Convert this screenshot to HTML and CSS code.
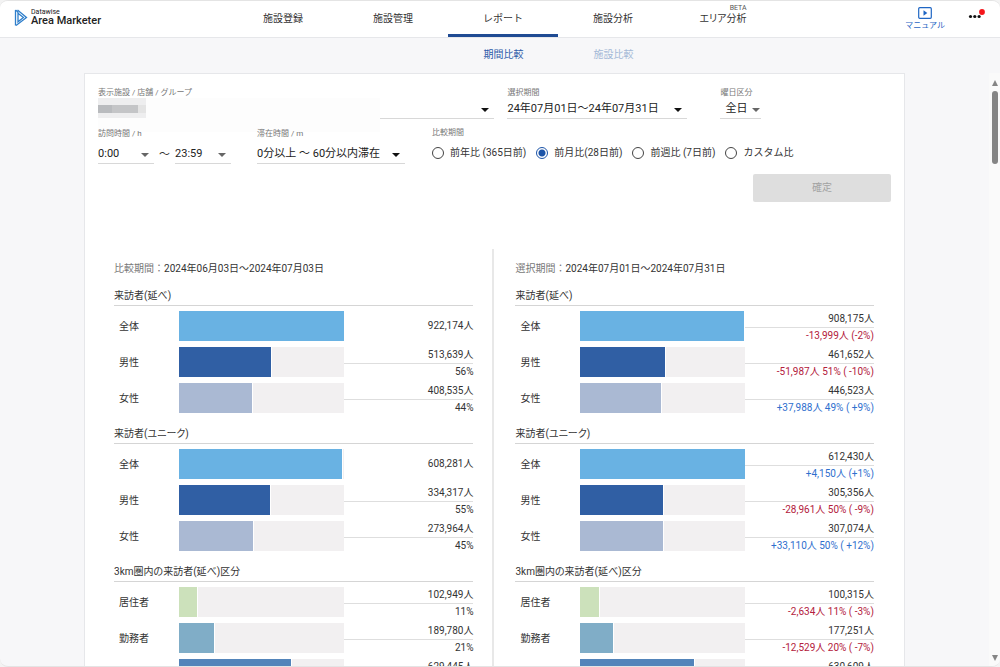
FILE: index.html
```html
<!DOCTYPE html>
<html lang="ja">
<head>
<meta charset="utf-8">
<title>Datawise Area Marketer</title>
<link rel="stylesheet" href="styles.css">
</head>
<body>
<div class="app">
  <header class="header">
    <a class="logo" href="#">
      <svg class="logo-mark" viewBox="0 0 14 18" width="14" height="18" fill="none" stroke="#2f7fcb" stroke-width="1.3">
        <path d="M1.500 1v15.500"/><path d="M3.500 1l9 7.500L2 16.500"/><path d="M4 4.200l5.400 4.300L4 12.800z"/><path d="M1.500 1l3 2.600"/>
      </svg>
      <span class="logo-text"><span class="logo-top">Datawise</span><span class="logo-main">Area Marketer</span></span>
    </a>
    <nav class="tabs">
      <a href="#">施設登録</a>
      <a href="#">施設管理</a>
      <a class="current" href="#">レポート</a>
      <a href="#">施設分析</a>
      <a href="#"><span class="beta-label">エリア分析<span class="beta">BETA</span></span></a>
    </nav>
    <div class="tools">
      <a class="manual" href="#">
        <svg viewBox="0 0 14 12" width="14" height="12"><rect x=".7" y=".7" width="12.600" height="10.600" rx="1" fill="none" stroke="#1f66c4" stroke-width="1.200"/><path d="M5.500 3.300v5.400L9.300 6z" fill="#1f66c4"/></svg>
        <span>マニュアル</span>
      </a>
      <button class="more" type="button" aria-label="メニュー">
        <svg viewBox="0 0 18 16" width="18" height="16"><g fill="#111"><circle cx="3.500" cy="10.500" r="1.600"/><circle cx="7.800" cy="10.500" r="1.600"/><circle cx="12.100" cy="10.500" r="1.600"/></g><circle cx="15" cy="6" r="2.900" fill="#f5151b"/></svg>
      </button>
    </div>
  </header>

  <div class="body">
    <main class="main">
      <nav class="subtabs">
        <a class="current" href="#">期間比較</a>
        <a href="#">施設比較</a>
      </nav>
      <div class="card">
        <form class="filters">
          <div class="filter-row">
            <div class="field facility">
              <label for="facility">表示施設 / 店舗 / グループ</label>
              <span class="select dark"><select id="facility"><option></option></select></span>
              <span class="mask"><i></i></span>
            </div>
            <div class="field period">
              <label for="period">選択期間</label>
              <span class="select dark"><select id="period"><option>24年07月01日～24年07月31日</option></select></span>
            </div>
            <div class="field weekday">
              <label for="weekday">曜日区分</label>
              <span class="select"><select id="weekday"><option>全日</option></select></span>
            </div>
          </div>
          <div class="filter-row second">
            <div class="field hours">
              <label for="from">訪問時間 / h</label>
              <div class="range">
                <span class="select"><select id="from"><option>0:00</option></select></span>
                <span class="tilde">～</span>
                <span class="select"><select aria-label="終了時間"><option>23:59</option></select></span>
              </div>
            </div>
            <div class="field stay">
              <label for="stay">滞在時間 / m</label>
              <span class="select dark"><select id="stay"><option>0分以上 ～ 60分以内滞在</option></select></span>
            </div>
            <fieldset class="field compare">
              <legend>比較期間</legend>
              <div class="radios">
                <label><input type="radio" name="cmp">前年比 (365日前)</label>
                <label><input type="radio" name="cmp" checked>前月比(28日前)</label>
                <label><input type="radio" name="cmp">前週比 (7日前)</label>
                <label><input type="radio" name="cmp">カスタム比</label>
              </div>
            </fieldset>
          </div>
          <button class="submit" type="submit" disabled>確定</button>
        </form>

        <div class="panes">
          <section class="pane">
            <p class="range-title"><span>比較期間：</span>2024年06月03日～2024年07月03日</p>
            <section class="group">
              <h2>来訪者(延べ)</h2>
              <div class="row"><span class="name">全体</span><div class="bar"><div class="fill total" style="width:100%"></div></div><div class="value single"><span>922,174人</span></div></div>
              <div class="row"><span class="name">男性</span><div class="bar"><div class="fill male" style="width:56%"></div></div><div class="value"><span>513,639人</span><span>56%</span></div></div>
              <div class="row"><span class="name">女性</span><div class="bar"><div class="fill female" style="width:44%"></div></div><div class="value"><span>408,535人</span><span>44%</span></div></div>
            </section>
            <section class="group">
              <h2>来訪者(ユニーク)</h2>
              <div class="row"><span class="name">全体</span><div class="bar"><div class="fill total" style="width:99%"></div></div><div class="value single"><span>608,281人</span></div></div>
              <div class="row"><span class="name">男性</span><div class="bar"><div class="fill male" style="width:55%"></div></div><div class="value"><span>334,317人</span><span>55%</span></div></div>
              <div class="row"><span class="name">女性</span><div class="bar"><div class="fill female" style="width:45%"></div></div><div class="value"><span>273,964人</span><span>45%</span></div></div>
            </section>
            <section class="group">
              <h2>3km圏内の来訪者(延べ)区分</h2>
              <div class="row"><span class="name">居住者</span><div class="bar"><div class="fill resident" style="width:11%"></div></div><div class="value"><span>102,949人</span><span>11%</span></div></div>
              <div class="row"><span class="name">勤務者</span><div class="bar"><div class="fill worker" style="width:21%"></div></div><div class="value"><span>189,780人</span><span>21%</span></div></div>
              <div class="row"><span class="name"></span><div class="bar"><div class="fill visitor" style="width:68%"></div></div><div class="value"><span>629,445人</span></div></div>
            </section>
          </section>
          <section class="pane">
            <p class="range-title"><span>選択期間：</span>2024年07月01日～2024年07月31日</p>
            <section class="group">
              <h2>来訪者(延べ)</h2>
              <div class="row"><span class="name">全体</span><div class="bar"><div class="fill total" style="width:99%"></div></div><div class="value"><span>908,175人</span><span class="down">-13,999人 (-2%)</span></div></div>
              <div class="row"><span class="name">男性</span><div class="bar"><div class="fill male" style="width:51%"></div></div><div class="value"><span>461,652人</span><span class="down">-51,987人 51% ( -10%)</span></div></div>
              <div class="row"><span class="name">女性</span><div class="bar"><div class="fill female" style="width:49%"></div></div><div class="value"><span>446,523人</span><span class="up">+37,988人 49% ( +9%)</span></div></div>
            </section>
            <section class="group">
              <h2>来訪者(ユニーク)</h2>
              <div class="row"><span class="name">全体</span><div class="bar"><div class="fill total" style="width:100%"></div></div><div class="value"><span>612,430人</span><span class="up">+4,150人 (+1%)</span></div></div>
              <div class="row"><span class="name">男性</span><div class="bar"><div class="fill male" style="width:50%"></div></div><div class="value"><span>305,356人</span><span class="down">-28,961人 50% ( -9%)</span></div></div>
              <div class="row"><span class="name">女性</span><div class="bar"><div class="fill female" style="width:50%"></div></div><div class="value"><span>307,074人</span><span class="up">+33,110人 50% ( +12%)</span></div></div>
            </section>
            <section class="group">
              <h2>3km圏内の来訪者(延べ)区分</h2>
              <div class="row"><span class="name">居住者</span><div class="bar"><div class="fill resident" style="width:11%"></div></div><div class="value"><span>100,315人</span><span class="down">-2,634人 11% ( -3%)</span></div></div>
              <div class="row"><span class="name">勤務者</span><div class="bar"><div class="fill worker" style="width:20%"></div></div><div class="value"><span>177,251人</span><span class="down">-12,529人 20% ( -7%)</span></div></div>
              <div class="row"><span class="name"></span><div class="bar"><div class="fill visitor" style="width:69%"></div></div><div class="value"><span>630,609人</span></div></div>
            </section>
          </section>
        </div>
      </div>
    </main>
    <div class="scrollbar" aria-hidden="true"><i class="arrow-up"></i><i class="thumb"></i><i class="arrow-down"></i></div>
  </div>
</div>
</body>
</html>
```
FILE: styles.css
```css
* { box-sizing: border-box; }
body {
  margin: 0;
  background: #f3f3f3;
  color: #333;
  font: 10px/16px Roboto, "Noto Sans CJK JP", sans-serif;
}
a { color: inherit; text-decoration: none; }
select, input, button { font: inherit; color: inherit; }
.app {
  display: flex;
  flex-direction: column;
  height: 100vh;
  overflow: hidden;
  border: 1px solid #e4e4e4;
  border-width: 1px 0;
  border-radius: 8px;
  background: #f7f7f9;
}

/* header */
.header {
  display: grid;
  grid-template-columns: 1fr auto 1fr;
  flex: none;
  height: 37px;
  padding: 0 8px 0 14px;
  border-bottom: 1px solid #e6e7ea;
  background: #fff;
}
.logo { display: flex; align-items: center; gap: 3px; padding-bottom: 2px; color: #222; }
.logo-text { display: flex; flex-direction: column; }
.logo-top { font-size: 7px; line-height: 6px; }
.logo-main { font-size: 11px; line-height: 12px; font-weight: 500; }
.tabs { display: grid; grid-template-columns: repeat(5, 110px); }
.tabs a { display: flex; align-items: center; justify-content: center; padding-top: 2px; border-bottom: 3px solid transparent; }
.tabs .current { border-color: #1f4b93; }
.beta-label { position: relative; font-feature-settings: "palt"; }
.beta { position: absolute; right: 0; top: -8px; font-size: 7px; line-height: 10px; color: #555; }
.tools { display: flex; justify-content: flex-end; gap: 22px; }
.manual { display: flex; flex-direction: column; align-items: center; padding-top: 6px; color: #1f66c4; font-size: 8px; line-height: 13px; }
.more { align-self: flex-start; margin: 0 7px 0 0; padding: 5px 0; border: 0; background: none; line-height: 0; }

/* scrolling area */
.body { display: flex; flex: 1; min-height: 0; }
.main { display: flex; flex-direction: column; flex: 1; min-width: 0; overflow: hidden; }
.subtabs { display: flex; flex: none; justify-content: center; height: 35px; padding: 0 0 1px 128px; color: #a3b8d6; }
.subtabs a { display: flex; align-items: center; justify-content: center; width: 110px; }
.subtabs .current { color: #2c5aa8; }
.card { width: 83%; margin: 0 auto; border: 1px solid #e6e7ea; background: #fff; }
.scrollbar { display: flex; flex-direction: column; align-items: center; width: 11px; margin-top: 35px; padding: 7px 0 5px; background: #fafafa; }
.arrow-up, .arrow-down { border: 3px solid transparent; }
.arrow-up { border-top-width: 0; border-bottom: 6px solid #858585; }
.arrow-down { margin-top: auto; border-bottom-width: 0; border-top: 6px solid #858585; }
.thumb { width: 6px; height: 73px; margin-top: 5px; border-radius: 3px; background: #858585; }

/* filters */
.filters { display: flex; flex-direction: column; padding: 12px 13px 47px; }
.filter-row { display: flex; align-items: flex-start; }
.filter-row.second { margin-top: 8px; }
.field { position: relative; display: flex; flex-direction: column; margin: 0; padding: 0; border: 0; }
.field > label, legend { padding: 0; font-size: 8px; line-height: 14px; color: #777; }
.field legend { line-height: 12px; }
.select { position: relative; display: block; border-bottom: 1px solid #d8d8d8; }
.select::after {
  content: "";
  position: absolute;
  right: 5px;
  top: 8px;
  border: 4px solid transparent;
  border-top-color: #666;
  border-bottom-width: 0;
}
.select.dark::after { border-top-color: #111; }
.select select {
  display: block;
  width: 100%;
  height: 18px;
  padding: 0;
  border: 0;
  outline: 0;
  appearance: none;
  background: none;
  font-size: 11px;
  color: #222;
}
.facility { width: 50%; }
.period { width: 180px; margin-left: 13px; }
.weekday { width: 41px; margin-left: 33px; }
.weekday select { padding-left: 5px; }
.weekday .select::after { right: 1px; }
.mask { position: absolute; left: 0; top: 12px; width: 282px; height: 34px; background: #fdfdfd; }
.mask i { display: block; width: 48px; height: 20px; background: linear-gradient(to right, #b9bbbe 14px, #c4c5c7 14px 40px, #e4e4e4 40px) 0 7px / 48px 8px no-repeat, #eeeeef; }
.second .select { margin-top: 4px; }
.range { display: flex; align-items: center; gap: 5px; font-size: 11px; }
.range .select { width: 56px; }
.tilde { padding-top: 4px; }
.stay { width: 148px; margin-left: 26px; }
.compare { margin-left: 27px; }
.radios { display: flex; gap: 10px; padding-top: 6px; }
.radios label { display: flex; align-items: center; gap: 6px; }
.radios input {
  width: 12px;
  height: 12px;
  margin: 0;
  border: 1px solid #444;
  border-radius: 50%;
  appearance: none;
  background: #fff;
}
.radios input:checked { border-color: #1c54a8; background: radial-gradient(circle, #1c54a8 3px, #fff 4px); }
.submit { align-self: flex-end; width: 138px; height: 28px; margin-top: 10px; border: 0; border-radius: 2px; background: #dedede; color: #a2a2a2; }

/* comparison */
.panes { display: grid; grid-template-columns: 1fr 1fr; }
.pane { padding: 12px 30px 0 21px; }
.pane:first-child { padding: 12px 19px 0 29px; border-right: 2px solid #e8e8e8; }
.range-title { margin: 0 0 8px; }
.range-title span { color: #777; }
.group { display: grid; row-gap: 6px; padding-bottom: 10px; font-feature-settings: "palt"; }
.group h2 { margin: 0 0 -1px; padding-top: 2px; border-bottom: 1px solid #d5d5d5; font-size: 10px; line-height: 18px; font-weight: 400; }
.row { display: grid; grid-template-columns: 65px 165px 1fr; height: 30px; }
.name { padding-left: 5px; line-height: 32px; }
.bar { height: 30px; background: #f2f0f1; }
.fill { height: 100%; box-shadow: 1px 0 #fff; }
.total { background: #69b2e3; }
.male { background: #305fa4; }
.female { background: #aab9d3; }
.resident { background: #cce1bb; }
.worker { background: #80adc7; }
.visitor { background: #5384ba; }
.value { display: flex; flex-direction: column; height: 30px; text-align: right; line-height: 16px; white-space: nowrap; }
.value span:nth-child(2) { border-top: 1px solid #dedede; }
.value.single { justify-content: center; }
.down { color: #b3203c; }
.up { color: #2f6fce; }
```
